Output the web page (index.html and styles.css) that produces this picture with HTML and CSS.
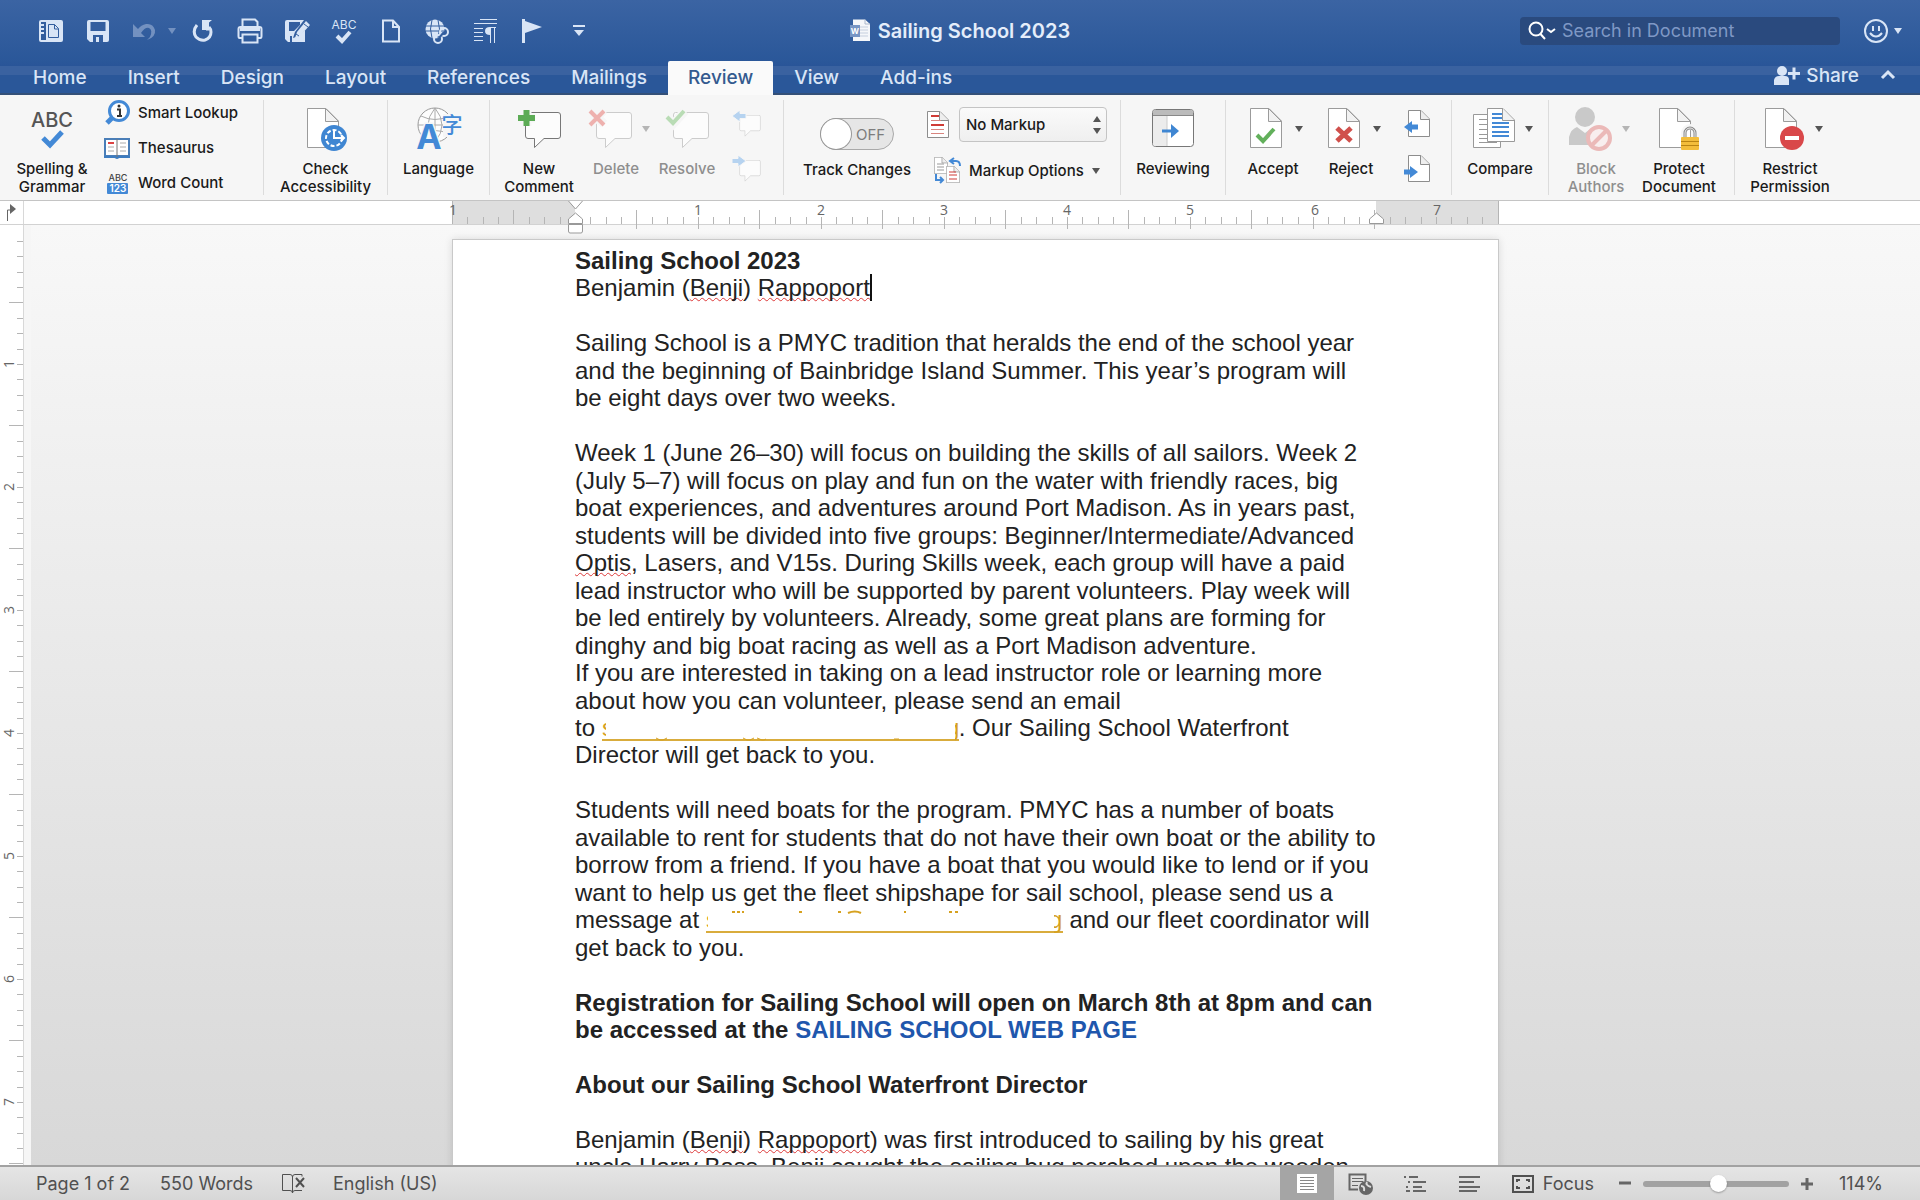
FILE: index.html
```html
<!DOCTYPE html>
<html lang="en">
<head>
<meta charset="utf-8">
<title>Sailing School 2023</title>
<link rel="stylesheet" href="styles.css">
</head>
<body>
<svg class="defs" aria-hidden="true">
  <defs>
    <symbol id="page" viewBox="0 0 32 40"><path d="M.5.5H19L31.500 13V39.500H.5z" fill="#fff" stroke="#9b9b9b"/><path d="M18.500.5V13.500H31.500z" fill="#f2f2f2" stroke="#9b9b9b"/></symbol>
    <symbol id="bubble" viewBox="0 0 36 37"><path d="M2.500.5H33Q35.500.5 35.500 3V24Q35.500 26.500 33 26.500H19L9.500 35.500V26.500H3Q.5 26.500.5 24V3Q.5.5 2.500.5z" fill="#fcfcfc" stroke="currentColor"/></symbol>
    <symbol id="minipage" viewBox="0 0 22 27"><path d="M.5.5H13L21.500 9V26.500H.5z" fill="#fff" stroke="#8d8d8d"/><path d="M12.500.5V9.500H21.500" fill="#eee" stroke="#8d8d8d"/></symbol>
    <symbol id="tri" viewBox="0 0 8 6"><path d="M0 0H8L4 6z" fill="currentColor"/></symbol>
  </defs>
</svg>

<header class="header">
  <div class="titlebar">
    <div class="quick">
      <button aria-label="Gallery"><svg width="24" height="24"><rect x="1" y="2" width="22" height="20" rx="1" fill="none" stroke="currentColor" stroke-width="2"/><path d="M7 2H23V22H7z" fill="currentColor"/><path d="M2 6h3M2 10h3M2 14h3" stroke="currentColor" stroke-width="2"/><path d="M9.500 5.500h6l4 4V18.500h-10z M15.500 5.500V10h4" fill="none" stroke="#325d9e" stroke-width="1"/></svg></button>
      <button aria-label="Save"><svg width="24" height="24"><path d="M1 3Q1 1 3 1H21Q23 1 23 3V21Q23 23 21 23H4L1 20z" fill="currentColor"/><path d="M4.500 3h15v9h-15zM7 16h10v7H7z" fill="#335e9f"/><path d="M10 18h3v5h-3z" fill="currentColor"/></svg></button>
      <button class="dim" aria-label="Undo" disabled><svg width="24" height="24"><path d="M1 5V18H13L9 14Q13 8 17 9Q21 11 18 18L15 21Q24 18 23 11Q21 4 14 5Q9 6 6 10z" fill="currentColor"/></svg></button>
      <button class="dim slim" aria-label="Undo history" disabled><svg width="8" height="6"><use href="#tri"/></svg></button>
      <button aria-label="Repeat"><svg width="24" height="24"><path d="M6 6Q1 12 5 18Q9 22 14 21Q20 19 20 13Q20 10 18 8" fill="none" stroke="currentColor" stroke-width="3"/><path d="M11 1H21L18 3.500V11.500H11z" fill="currentColor"/><path d="M10 4v8h5" fill="none" stroke="#335e9f" stroke-width="2"/></svg></button>
      <button aria-label="Print"><svg width="26" height="26"><path d="M5.500 8V1.500H18L20.500 4V8M5.500 20H2.500Q1.500 20 1.500 18V11Q1.500 9 3.500 9H22.500Q24.500 9 24.500 11V18Q24.500 20 23.500 20H20.500M5.500 16.500H20.500V24.500H5.500z" fill="none" stroke="currentColor" stroke-width="2"/><path d="M3 9H23V13H3z" fill="currentColor"/></svg></button>
      <button aria-label="Save as"><svg width="27" height="24"><path d="M1 3Q1 1 3 1H20L17 5 11 13 9 19 15 17 21 11V23H4L1 20z" fill="currentColor"/><path d="M5 3h11v3l-6 6H5zM6 17h2v6H6z" fill="#335e9f"/><path d="M11 19L13 13L22 2L26 6L16 17z" fill="currentColor"/><path d="M12 15l3 2M20 5l4 3" stroke="#335e9f"/></svg></button>
      <button aria-label="Spelling"><svg width="26" height="26"><text x="13" y="11" text-anchor="middle" class="abc" font-size="12" fill="currentColor">ABC</text><path d="M6 18l5 5L19 14" fill="none" stroke="currentColor" stroke-width="4"/></svg></button>
      <button aria-label="New document"><svg width="20" height="24"><path d="M2 1.500H12L18 8V22.500H2z M12 1.500V8H18" fill="none" stroke="currentColor" stroke-width="2"/></svg></button>
      <button aria-label="Web link"><svg width="26" height="26"><circle cx="10" cy="11" r="9.500" fill="currentColor"/><path d="M1 8h18M1 13h18M7 2q-3 9 0 18M13 2q3 9 0 18" stroke="#335e9f" fill="none"/><circle cx="19" cy="14" r="4" fill="none" stroke="currentColor" stroke-width="2"/><circle cx="13" cy="21" r="4" fill="none" stroke="currentColor" stroke-width="2"/><path d="M14 20l5-6" stroke="#335e9f" stroke-width="2"/></svg></button>
      <button aria-label="Formatting marks"><svg width="24" height="26"><path d="M7 1.500H24M1 5.500H24M1 10.500H10M1 14.500H10M1 18.500H10M1 22.500H10" stroke="currentColor"/><path d="M17 9.500H23M17.500 9V25M21.500 9V25" fill="none" stroke="currentColor" stroke-width="1"/><path d="M17 9q-5 0-5 4t5 4z" fill="currentColor"/></svg></button>
      <button aria-label="Flag"><svg width="22" height="26"><path d="M1 1H4V3L21 9 4 15V25H1z" fill="currentColor"/></svg></button>
      <button aria-label="Customize toolbar"><svg width="12" height="12"><path d="M0 1H12" stroke="currentColor" stroke-width="2"/><path d="M1 5H11L6 11z" fill="currentColor"/></svg></button>
    </div>
    <div class="doctitle">
      <svg width="22" height="24"><path d="M3 .5H15L20 5V22H3z" fill="#f5f7fa"/><path d="M15 .5V5h5" fill="none" stroke="#a9b6ca"/><path d="M10 8h8M10 11h8M10 14h8M10 17h8" stroke="#c5cfde"/><path d="M0 6H10V18H0z" fill="#7795c4"/><text x="5" y="15" text-anchor="middle" class="abc" font-size="8" font-weight="700" fill="#fff">W</text></svg>
      <h1>Sailing School 2023</h1>
    </div>
    <div class="titleright">
      <div class="search">
        <svg width="30" height="20"><circle cx="9" cy="8" r="6.500" fill="none" stroke="#fff" stroke-width="2"/><path d="M13.500 13L18 18M20 8l4 3 4-3" fill="none" stroke="#fff" stroke-width="2"/></svg>
        <input type="search" aria-label="Search in Document" placeholder="Search in Document">
      </div>
      <button class="smile" aria-label="Feedback"><svg width="26" height="26"><circle cx="13" cy="13" r="11" fill="none" stroke="currentColor" stroke-width="2"/><path d="M10 8v5M16 8v5M7 15q6 7 12 0" fill="none" stroke="currentColor" stroke-width="2"/></svg><svg width="8" height="6"><use href="#tri"/></svg></button>
    </div>
  </div>
  <nav class="tabs">
    <a href="#home">Home</a><a href="#insert">Insert</a><a href="#design">Design</a><a href="#layout">Layout</a><a href="#references">References</a><a href="#mailings">Mailings</a><a href="#review" class="active" aria-current="page">Review</a><a href="#view">View</a><a href="#addins">Add-ins</a>
    <button class="share"><svg width="26" height="20"><circle cx="8" cy="6" r="5" fill="currentColor"/><path d="M0 20V15Q1 11 5 11H11Q15 11 15 15V20z" fill="currentColor"/><path d="M14 8.500H26M20 2.500V14.500" stroke="currentColor" stroke-width="3"/></svg>Share</button>
    <button class="collapse" aria-label="Collapse ribbon"><svg width="16" height="12"><path d="M2 9l6-6 6 6" fill="none" stroke="currentColor" stroke-width="3"/></svg></button>
  </nav>
</header>

<section class="ribbon" aria-label="Review">
  <div class="group g-proof">
    <button class="tool"><span class="pic"><svg width="44" height="44"><text x="22" y="20" text-anchor="middle" class="abc" font-size="20" fill="#555">ABC</text><path d="M13 31l7 7L32 25" fill="none" stroke="#4389d6" stroke-width="5"/></svg></span><span>Spelling &amp;<br>Grammar</span></button>
    <div class="stack">
      <button><svg width="26" height="26"><path d="M10 16L3 23" stroke="#4389d6" stroke-width="5"/><circle cx="15" cy="11" r="9.500" fill="#fff" stroke="#4389d6" stroke-width="3"/><path d="M13 9.500h3V16M13 16h5" fill="none" stroke="#333" stroke-width="2"/><circle cx="15" cy="6" r="1.500" fill="#333"/></svg>Smart Lookup</button>
      <button><svg width="26" height="22"><path d="M1 2H25V19H1z" fill="#fff" stroke="#4a7eb8" stroke-width="2"/><path d="M0 20H11L13 21 15 20H26" fill="none" stroke="#3d7cc0" stroke-width="2"/><path d="M13 2V20" stroke="#777"/><path d="M4 6h6" stroke="#d44" stroke-width="2"/><path d="M4 10h6M4 14h6M16 6h6M16 10h6M16 14h6" stroke="#aaa"/></svg>Thesaurus</button>
      <button><svg width="26" height="22"><text x="14" y="9" text-anchor="middle" class="abc" font-size="9" fill="#444">ABC</text><rect x="3" y="11" width="21" height="11" rx="1" fill="#4389d6"/><text x="14" y="20" text-anchor="middle" class="abc" font-size="10" font-weight="600" fill="#fff">123</text></svg>Word Count</button>
    </div>
  </div>
  <div class="group g-access">
    <button class="tool"><span class="pic"><svg width="44" height="44"><use href="#page" x="3" y="1" width="32" height="40"/><circle cx="30" cy="31" r="13" fill="#3f86d2"/><circle cx="30" cy="31" r="8" fill="none" stroke="#fff" stroke-width="2" stroke-dasharray="4 2"/><path d="M30 23V31H40M37 28l3 3-3 3" fill="none" stroke="#fff" stroke-width="2"/></svg></span><span>Check<br>Accessibility</span></button>
  </div>
  <div class="group g-lang">
    <button class="tool"><span class="pic"><svg width="48" height="44"><circle cx="20" cy="18" r="17" fill="#fdfdfd" stroke="#999"/><path d="M3 18H37M6 9q14 7 28 0M6 27q14-7 28 0M20 1V35M20 1q-14 17 0 34M20 1q14 17 0 34" fill="none" stroke="#aaa"/><path d="M28 7H48V30H28z" fill="#f6f6f6"/><text x="37" y="25" text-anchor="middle" class="cjk" font-size="21" fill="#4389d6">字</text><text x="14" y="42" text-anchor="middle" class="abc" font-size="34" font-weight="700" fill="#4389d6" stroke="#f6f6f6" stroke-width="3" paint-order="stroke">A</text></svg></span><span>Language</span></button>
  </div>
  <div class="group g-comments">
    <button class="tool w-new"><span class="pic"><svg width="44" height="44" color="#777"><use href="#bubble" x="8" y="5" width="36" height="37"/><path d="M2 11H18M10 3V19" stroke="#f6f6f6" stroke-width="9"/><path d="M1 11H18M9.500 3V19" stroke="#5cab55" stroke-width="6"/></svg></span><span>New<br>Comment</span></button>
    <button class="tool dimmed w-del" disabled><span class="pic"><svg width="44" height="44" color="#ccc"><use href="#bubble" x="8" y="5" width="36" height="37"/><path d="M2 3L16 17M16 3L2 17" stroke="#f6f6f6" stroke-width="9"/><path d="M2 4L16 18M16 4L2 18" stroke="#eeb1ae" stroke-width="4"/></svg><svg class="drop" width="8" height="6"><use href="#tri"/></svg></span><span>Delete</span></button>
    <button class="tool dimmed w-res" disabled><span class="pic"><svg width="44" height="44" color="#ccc"><use href="#bubble" x="8" y="5" width="36" height="37"/><path d="M1 10l7 7L20 4" fill="none" stroke="#f6f6f6" stroke-width="9"/><path d="M2 10l6 6L19 4" fill="none" stroke="#b9dcb5" stroke-width="4"/></svg></span><span>Resolve</span></button>
    <div class="mini">
      <button aria-label="Previous comment" disabled><svg width="30" height="28" color="#ccc"><use href="#bubble" x="7" y="5" width="22" height="22"/><path d="M14 3.500H8V0L0 6 8 12V8.500H14z" fill="#b6d3f0" stroke="#f6f6f6"/></svg></button>
      <button aria-label="Next comment" disabled><svg width="30" height="28" color="#ccc"><use href="#bubble" x="7" y="5" width="22" height="22"/><path d="M0 3.500H6V0L14 6 6 12V8.500H0z" fill="#b6d3f0" stroke="#f6f6f6"/></svg></button>
    </div>
  </div>
  <div class="group g-track">
    <div class="trackbox">
      <label class="toggle"><input type="checkbox" role="switch" aria-label="Track Changes"><span class="knob"></span><span>OFF</span></label>
      <span class="cap">Track Changes</span>
    </div>
    <div class="markup">
      <div class="row">
        <svg width="22" height="28"><use href="#minipage" width="22" height="27"/><path d="M4 5h8M4 14h13" stroke="#cf3b36" stroke-width="2"/><path d="M4 9.500h10M4 18.500h13M4 22.500h13" stroke="#d9857f"/></svg>
        <span class="select"><select aria-label="Markup"><option>No Markup</option><option>All Markup</option></select><svg width="8" height="18"><path d="M0 6L4 0 8 6zM0 12H8L4 18z" fill="#555"/></svg></span>
      </div>
      <button class="options"><svg width="27" height="27"><use href="#minipage" x="0" y="0" width="14" height="17"/><path d="M3 7h7M3 10h7M3 13h7" stroke="#999"/><use href="#minipage" x="12" y="9" width="14" height="17"/><path d="M15 15h7M15 18h8M15 22h8" stroke="#cf3b36"/><path d="M16 4h6q4 0 4 5M20 1l-4 3 4 3M2 17v6h6M6 20l3 3-3 3" fill="none" stroke="#4389d6" stroke-width="2"/></svg>Markup Options<svg width="8" height="6"><use href="#tri"/></svg></button>
    </div>
  </div>
  <div class="group g-pane">
    <button class="tool"><span class="pic"><svg width="42" height="44"><rect x=".5" y="2.500" width="41" height="37" rx="3" fill="#fff" stroke="#777"/><path d="M1 8H15V39H3Q1 39 1 37z" fill="#ececec"/><path d="M1 8V5Q1 3 3 3H39Q41 3 41 5V8z" fill="#bbb"/><path d="M1 8.500H41" stroke="#888"/><path d="M15 9V39" stroke="#ccc"/><path d="M10 24H24" stroke="#3f86d2" stroke-width="3"/><path d="M19 17L27 24 19 31z" fill="#3f86d2"/></svg></span><span>Reviewing</span></button>
  </div>
  <div class="group g-changes">
    <button class="tool w-acc"><span class="pic"><svg width="36" height="44"><use href="#page" x="1" y="1" width="32" height="40"/><path d="M8 28l6 6L25 22" fill="none" stroke="#62b05b" stroke-width="4"/></svg><svg class="drop" width="8" height="6"><use href="#tri"/></svg></span><span>Accept</span></button>
    <button class="tool w-acc"><span class="pic"><svg width="36" height="44"><use href="#page" x="1" y="1" width="32" height="40"/><path d="M10 21L24 34M24 21L10 34" stroke="#d0504c" stroke-width="5"/></svg><svg class="drop" width="8" height="6"><use href="#tri"/></svg></span><span>Reject</span></button>
    <div class="mini">
      <button aria-label="Previous change"><svg width="26" height="28"><use href="#minipage" x="4" y="0" width="22" height="27"/><path d="M14 14.500H8V11L0 17 8 23V19.500H14z" fill="#4389d6"/></svg></button>
      <button aria-label="Next change"><svg width="26" height="28"><use href="#minipage" x="4" y="0" width="22" height="27"/><path d="M0 14.500H6V11L14 17 6 23V19.500H0z" fill="#4389d6"/></svg></button>
    </div>
  </div>
  <div class="group g-compare">
    <button class="tool"><span class="pic"><svg width="42" height="44"><path d="M.5 7.500H27.500V40.500H.5z" fill="#fff" stroke="#999"/><path d="M6 12.500h10M6 17.500h10M6 22.500h10M6 27.500h10M6 31.500h18M6 35.500h18" stroke="#999"/><path d="M14.500 1.500H30L41.500 13V34.500H14.500z" fill="#fff" stroke="#999"/><path d="M29.500 1.500V13.500H41" fill="#f2f2f2" stroke="#999"/><path d="M19 7h10M19 11h10M19 16h17M19 20h17M19 25h17M19 29h17" stroke="#4389d6" stroke-width="2"/></svg><svg class="drop" width="8" height="6"><use href="#tri"/></svg></span><span>Compare</span></button>
  </div>
  <div class="group g-protect">
    <button class="tool dimmed w-block" disabled><span class="pic"><svg width="44" height="44"><circle cx="17" cy="10" r="10" fill="#c9c9c9"/><path d="M1 38V30Q3 22 9 20L17 26 25 20 30 24V38z" fill="#c9c9c9"/><circle cx="31" cy="31" r="11" fill="#f8eeee" stroke="#ebb9b8" stroke-width="4"/><path d="M24 38L38 24" stroke="#ebb9b8" stroke-width="4"/></svg><svg class="drop" width="8" height="6"><use href="#tri"/></svg></span><span>Block<br>Authors</span></button>
    <button class="tool w-prot"><span class="pic"><svg width="44" height="44"><use href="#page" x="2" y="1" width="32" height="40"/><path d="M27 34V26a6 6 0 0 1 12 0V34" fill="none" stroke="#f6f6f6" stroke-width="6"/><path d="M28 32V26a5 5 0 0 1 10 0V32" fill="none" stroke="#888" stroke-width="3"/><path d="M28 32V26a5 5 0 0 1 10 0V32" fill="none" stroke="#eee" stroke-width="1"/><rect x="24" y="30" width="18" height="13" rx="1" fill="#f3bd3b"/><path d="M24 34.500H42M24 38.500H42" stroke="#b98413"/></svg></span><span>Protect<br>Document</span></button>
  </div>
  <div class="group g-restrict">
    <button class="tool"><span class="pic"><svg width="42" height="44"><use href="#page" x="2" y="1" width="32" height="40"/><circle cx="29" cy="31" r="12" fill="#d9484a"/><path d="M22 31H36" stroke="#fff" stroke-width="4"/></svg><svg class="drop" width="8" height="6"><use href="#tri"/></svg></span><span>Restrict<br>Permission</span></button>
  </div>
</section>

<div class="hruler">
  <div class="corner"><svg width="24" height="24"><path d="M7.500 20V9H12" fill="none" stroke="#666"/><path d="M10 3L16 8 10 13z" fill="#666"/></svg></div>
  <svg class="scale" width="1047" height="30">
    <defs><pattern id="ht" x="0" y="0" width="123" height="30" patternUnits="userSpaceOnUse"><path d="M.5 16V28M15.500 16V23M31.500 16V23M46.500 16V23M61.500 9V28M77.500 16V23M92.500 16V23M108.500 16V23" stroke="#b5b5b5"/></pattern></defs>
    <rect width="123" height="23" fill="#dedede"/><rect x="924" width="123" height="23" fill="#dedede"/>
    <path d="M.5 0V23M1046.500 0V23" stroke="#b5b5b5"/>
    <rect x="10" width="1030" height="23" fill="url(#ht)"/><rect x="123" y="23" width="802" height="7" fill="url(#ht)"/>
    <g class="nums"><text x="1" y="14">1</text><text x="246" y="14">1</text><text x="369" y="14">2</text><text x="492" y="14">3</text><text x="615" y="14">4</text><text x="738" y="14">5</text><text x="863" y="14">6</text><text x="985" y="14">7</text></g>
    <path d="M116.500 0L123.500 8 130.500 0M116.500 22.500V18L123.500 12 130.500 18V22.500z M116.500 23.500H130.500V30Q130.500 32 129 32H118Q116.500 32 116.500 30z" fill="#fff" stroke="#999"/>
    <path d="M917.500 22.500V18L924.500 12 931.500 18V22.500z" fill="#fff" stroke="#999"/>
  </svg>
</div>

<main class="workspace">
  <svg class="vruler" width="24" height="100%">
    <defs><pattern id="vt" x="0" y="16" width="24" height="123" patternUnits="userSpaceOnUse"><path d="M17 .5H23M17 15.500H23M17 31.500H23M17 46.500H23M9 61.500H23M17 77.500H23M17 92.500H23M17 108.500H23" stroke="#b5b5b5"/></pattern></defs>
    <rect y="16" width="24" height="100%" fill="url(#vt)"/>
    <g class="nums"><text transform="translate(14 139) rotate(-90)">1</text><text transform="translate(14 262) rotate(-90)">2</text><text transform="translate(14 385) rotate(-90)">3</text><text transform="translate(14 508) rotate(-90)">4</text><text transform="translate(14 631) rotate(-90)">5</text><text transform="translate(14 754) rotate(-90)">6</text><text transform="translate(14 877) rotate(-90)">7</text></g>
  </svg>
  <div class="canvas">
    <article class="sheet">
      <h2>Sailing School 2023</h2>
      <p>Benjamin (<u>Benji</u>) <u>Rappoport</u><span class="caret"></span></p>
      <p class="gap">Sailing School is a PMYC tradition that heralds the end of the school year<br>and the beginning of Bainbridge Island Summer. This year’s program will<br>be eight days over two weeks.</p>
      <p class="gap">Week 1 (June 26–30) will focus on building the skills of all sailors. Week 2<br>(July 5–7) will focus on play and fun on the water with friendly races, big<br>boat experiences, and adventures around Port Madison. As in years past,<br>students will be divided into five groups: Beginner/Intermediate/Advanced<br><u>Optis</u>, Lasers, and V15s. During Skills week, each group will have a paid<br>lead instructor who will be supported by parent volunteers. Play week will<br>be led entirely by volunteers. Already, some great plans are forming for<br>dinghy and big boat racing as well as a Port Madison adventure.</p>
      <p>If you are interested in taking on a lead instructor role or learning more<br>about how you can volunteer, please send an email<br>to <a class="mail" href="#mail" aria-label="Email"><svg width="357" height="23"><defs><clipPath id="c1"><path d="M0 0H4V19H0zM353 0H358V23H353z"/></clipPath></defs><g clip-path="url(#c1)"><text x="0" y="17">s</text><text x="344" y="17">g</text></g><path d="M54 19l4 2h3l4-2M141 19l4 2h3l4-2M155 19l5 2h2l2-1M292 20h5" fill="none" stroke="currentColor"/></svg></a>. Our Sailing School Waterfront<br>Director will get back to you.</p>
      <p class="gap">Students will need boats for the program. PMYC has a number of boats<br>available to rent for students that do not have their own boat or the ability to<br>borrow from a friend. If you have a boat that you would like to lend or if you<br>want to help us get the fleet shipshape for sail school, please send us a<br>message at <a class="mail" href="#mail2" aria-label="Email"><svg width="357" height="23"><defs><clipPath id="c2"><path d="M0 0H2V19H0zM348 0H358V23H348z"/></clipPath></defs><g clip-path="url(#c2)"><text x="0" y="17">s</text><text x="343" y="17">g</text></g><path d="M26 1h3M31 1h3M36 1h2M93 1h3M132 1h3M198 1h2M243 1h3M249 1h3" stroke="currentColor" stroke-width="2"/><path d="M142 2q7-3 13 0" fill="none" stroke="currentColor" stroke-width="2"/></svg></a> and our fleet coordinator will<br>get back to you.</p>
      <p class="gap"><strong>Registration for Sailing School will open on March 8th at 8pm and can<br>be accessed at the <a class="web" href="#school">SAILING SCHOOL WEB PAGE</a></strong></p>
      <h2 class="gap">About our Sailing School Waterfront Director</h2>
      <p class="gap">Benjamin (<u>Benji</u>) <u>Rappoport</u>) was first introduced to sailing by his great<br>uncle Harry Bass. Benji caught the sailing bug perched upon the wooden</p>
    </article>
  </div>
</main>

<footer class="status">
  <span class="s-page">Page 1 of 2</span>
  <span class="s-words">550 Words</span>
  <button class="s-proof" aria-label="Proofing"><svg width="24" height="22"><path d="M21 3.500V1.500H14Q11.500 1.500 11.500 4Q11.500 1.500 9 1.500H1.500V17.500H9Q11.500 17.500 11.500 20Q11.500 17.500 14 17.500H21M11.500 3V20" fill="none" stroke="currentColor" stroke-width="1"/><path d="M15 5L23 14M23 5L15 14" stroke="currentColor" stroke-width="2"/></svg></button>
  <span>English (US)</span>
  <div class="views">
    <button class="on" aria-label="Print layout"><svg width="22" height="22"><rect x="1" y="1" width="20" height="19" fill="#fff"/><path d="M4 4.500H18M4 7.500H18M4 10.500H18M4 13.500H18M4 16.500H18" stroke="#888"/></svg></button>
    <button aria-label="Web layout"><svg width="26" height="22"><path d="M10 16.500H1.500V1.500H17.500V8" fill="none" stroke="currentColor" stroke-width="2"/><path d="M4 5.500H15M4 8.500H15M4 12.500H10" stroke="currentColor"/><circle cx="18" cy="15" r="7" fill="currentColor"/><path d="M13 13q4 0 3 5M19 9q-2 3 4 5" fill="none" stroke="#ddd" stroke-width="2"/></svg></button>
    <button aria-label="Outline"><svg width="24" height="18"><path d="M1 2H3M6 2H15M5 7H7M10 7H23M3 12H5M10 12H19M3 16H7M10 16H23" stroke="currentColor" stroke-width="2"/></svg></button>
    <button aria-label="Draft"><svg width="22" height="18"><path d="M1 2H22M1 7H16M1 12H22M1 16H19" stroke="currentColor" stroke-width="2"/></svg></button>
  </div>
  <button class="focus"><svg width="22" height="18"><path d="M1 1H21V17H1z" fill="none" stroke="currentColor" stroke-width="2"/><path d="M5 7V5H8M14 5h3V7M17 11v2H14M8 13H5V11" fill="none" stroke="currentColor" stroke-width="2"/></svg>Focus</button>
  <button class="zoombtn" aria-label="Zoom out"><svg width="14" height="14"><path d="M1 6H13" stroke="currentColor" stroke-width="3"/></svg></button>
  <input class="zoom" type="range" min="0" max="100" value="52" aria-label="Zoom">
  <button class="zoombtn" aria-label="Zoom in"><svg width="14" height="14"><path d="M1 7H13M7 1V13" stroke="currentColor" stroke-width="3"/></svg></button>
  <span class="pct">114%</span>
</footer>
</body>
</html>
```
FILE: styles.css
```css
* { box-sizing: border-box; }
body {
  margin: 0;
  height: 100vh;
  display: flex;
  flex-direction: column;
  overflow: hidden;
  font-family: Inter, "Noto Sans", sans-serif;
  font-size: 15px;
  color: #1a1a1a;
  background: #fff;
}
button {
  border: 0;
  padding: 0;
  background: none;
  font: inherit;
  color: inherit;
}
svg { display: block; flex: none; }
.defs { position: absolute; width: 0; height: 0; }
.abc { font-family: Inter, sans-serif; }
.cjk { font-family: "Noto Sans CJK SC", sans-serif; }

/* title bar and tabs */
.header {
  flex: none;
  color: #d9e5f6;
  background: linear-gradient(#3b64a3 0, #2a5799 62px, #295598 66px, #3a62a0 66px, #3a62a0 75px, #2a5799 75px, #2a5799 93px, #345078 93px);
}
.titlebar {
  display: grid;
  grid-template-columns: 1fr auto 1fr;
  align-items: center;
  height: 61px;
}
.quick { display: flex; align-items: center; padding-left: 28px; }
.quick button { display: flex; justify-content: center; width: 46px; margin-right: 1px; }
.quick .slim { width: 10px; margin-right: 3px; }
.quick .dim { color: #7391c0; }
.quick .dim:not(.slim) { width: 44px; }
.doctitle { display: flex; align-items: center; gap: 6px; }
.doctitle h1 { margin: 0; font-size: 20px; font-weight: 600; color: #e4edfa; }
.titleright { display: flex; justify-content: flex-end; align-items: center; gap: 23px; padding-right: 18px; }
.search {
  display: flex;
  align-items: center;
  gap: 5px;
  width: 320px;
  height: 28px;
  padding-left: 7px;
  border-radius: 4px;
  background: #2a4a7e;
}
.search input {
  flex: 1;
  min-width: 0;
  border: 0;
  padding: 0;
  background: none;
  font: inherit;
  font-size: 18px;
  color: #fff;
}
.search input::placeholder { color: #7f98c5; }
.smile { display: flex; align-items: center; gap: 5px; }
.tabs { display: flex; gap: 1px; height: 34px; padding: 0 24px 0 13px; font-size: 19px; font-weight: 500; }
.tabs a { padding: 0 20px; line-height: 33px; color: inherit; text-decoration: none; }
.tabs .active { color: #345a8f; background: #fafafa; border-radius: 2px 2px 0 0; }
.share { display: flex; align-items: center; gap: 6px; margin-left: auto; height: 28px; }
.collapse { margin-left: 20px; height: 28px; }

/* ribbon */
.ribbon {
  flex: none;
  display: flex;
  height: 106px;
  padding: 5px 0;
  border-bottom: 1px solid #c4c4c4;
  background: #f6f6f6;
  font-weight: 500;
}
.group { display: flex; flex: none; border-right: 1px solid #dcdcdc; }
.group:last-child { border-right: 0; }
.tool {
  display: flex;
  flex: none;
  flex-direction: column;
  align-items: center;
  justify-content: flex-start;
  width: 100%;
  height: 96px;
  padding-top: 7px;
  line-height: 18px;
  text-align: center;
  white-space: nowrap;
}
.tool .pic { display: flex; flex: none; height: 53px; }
.drop { margin: 19px -6px 0 10px; color: #555; }
.dimmed { color: #8e8e8e; }
.dimmed .drop { color: #b5b5b5; }
.mini { display: flex; flex-direction: column; gap: 17px; padding-top: 10px; }
.g-proof { width: 264px; }
.g-proof .tool { width: 104px; }
.stack { display: flex; flex-direction: column; margin: -5px 0; }
.stack button { display: flex; flex: none; align-items: center; gap: 8px; height: 35px; }
.g-access { width: 124px; }
.g-lang { width: 102px; }
.g-comments { width: 294px; }
.w-new { width: 98px; }
.w-del { width: 56px; }
.w-res { width: 86px; }
.g-comments .mini { padding-left: 2px; }
.g-track { width: 337px; padding-left: 20px; }
.trackbox { display: flex; flex-direction: column; align-items: center; gap: 11px; width: 106px; padding-top: 18px; }
.toggle {
  display: flex;
  align-items: center;
  gap: 5px;
  width: 74px;
  height: 32px;
  border: 1px solid #a9a9a9;
  border-radius: 16px;
  background: #e6e6e6;
  font-weight: 400;
  color: #7d7d7d;
}
.toggle input { position: absolute; opacity: 0; }
.knob { width: 30px; height: 30px; border-radius: 50%; background: #fff; box-shadow: 0 0 0 1px #999; }
.cap { white-space: nowrap; line-height: 18px; }
.markup { display: flex; flex-direction: column; gap: 15px; padding: 7px 0 0 17px; }
.markup .row { display: flex; align-items: center; gap: 10px; }
.select { display: flex; align-items: center; width: 148px; height: 35px; border: 1px solid #c4c4c4; border-radius: 4px; background: linear-gradient(#fafafa, #efefef); }
.select select { flex: 1; height: 33px; padding: 0 0 0 6px; border: 0; background: none; appearance: none; font: inherit; color: inherit; }
.select svg { margin-right: 5px; }
.options { display: flex; align-items: center; gap: 8px; padding-left: 7px; white-space: nowrap; }
.options svg:last-child { color: #555; }
.g-pane { width: 105px; }
.g-changes { width: 226px; padding-left: 8px; }
.w-acc { width: 78px; }
.g-changes .mini { padding-left: 14px; }
.g-compare { width: 97px; }
.g-protect { width: 186px; }
.w-block { width: 94px; }
.w-prot { width: 72px; }
.g-restrict { width: 110px; }

/* rulers */
.nums { font-family: "Open Sans", sans-serif; font-size: 14px; fill: #666; text-anchor: middle; }
.hruler {
  position: relative;
  z-index: 1;
  flex: none;
  display: flex;
  justify-content: center;
  height: 24px;
  padding-left: 31px;
  border-bottom: 1px solid #d2d2d2;
  background: #fff;
}
.corner { position: absolute; left: 0; top: 0; width: 24px; height: 23px; border-right: 1px solid #d8d8d8; }
.scale { overflow: visible; }

/* document */
.workspace { flex: 1; min-height: 0; display: flex; overflow: hidden; }
.vruler { background: #fff; border-right: 1px solid #d8d8d8; }
.canvas { flex: 1; padding-top: 14px; border-left: 7px solid #f6f6f6; background: linear-gradient(#f8f8f8, #d8d8d8); }
.sheet {
  width: 1047px;
  height: 1300px;
  margin: 0 auto;
  padding: 7px 0 0 122px;
  border: 1px solid #c9c9c9;
  background: #fff;
  box-shadow: 0 0 8px rgba(0, 0, 0, .12);
  font-family: "Liberation Sans", Arial, sans-serif;
  font-size: 24px;
  line-height: 1.145;
  color: #222;
  white-space: nowrap;
}
.sheet p, .sheet h2 { margin: 0; font-size: inherit; }
.sheet .gap { margin-top: 1.145em; }
.sheet u { text-decoration: underline wavy #dd3a3a 1px; text-decoration-skip-ink: none; text-underline-offset: 1px; }
.caret { border-right: 2px solid #111; }
.mail { display: inline-block; height: 22px; border-bottom: 2px solid #d9ac3c; color: #d6a11f; vertical-align: -5px; }
.mail svg { fill: currentColor; overflow: visible; }
.web { color: #1f57ad; text-decoration: none; }

/* status bar */
.status {
  flex: none;
  display: flex;
  align-items: center;
  height: 35px;
  padding-left: 36px;
  border-top: 2px solid #a2a2a2;
  background: linear-gradient(#e5e5e5, #d7d7d7);
  font-size: 18px;
  color: #505050;
  white-space: nowrap;
}
.s-words { margin-left: 30px; }
.s-proof { margin: 0 28px; }
.views { display: flex; align-self: stretch; margin-left: auto; }
.views button { display: flex; align-items: center; justify-content: center; width: 54px; color: #666; }
.views .on { background: #a5a5a5; }
.focus { display: flex; align-items: center; gap: 9px; margin: 0 24px 0 16px; }
.zoombtn { color: #666; }
.zoom { width: 146px; height: 20px; margin: 0 11px; appearance: none; background: none; }
.zoom::-webkit-slider-runnable-track { height: 6px; border-radius: 3px; background: #a2a2a2; }
.zoom::-webkit-slider-thumb { appearance: none; width: 17px; height: 17px; margin-top: -6px; border-radius: 50%; background: #fff; box-shadow: 0 1px 2px rgba(0, 0, 0, .3); }
.pct { width: 106px; padding-left: 25px; }
```
